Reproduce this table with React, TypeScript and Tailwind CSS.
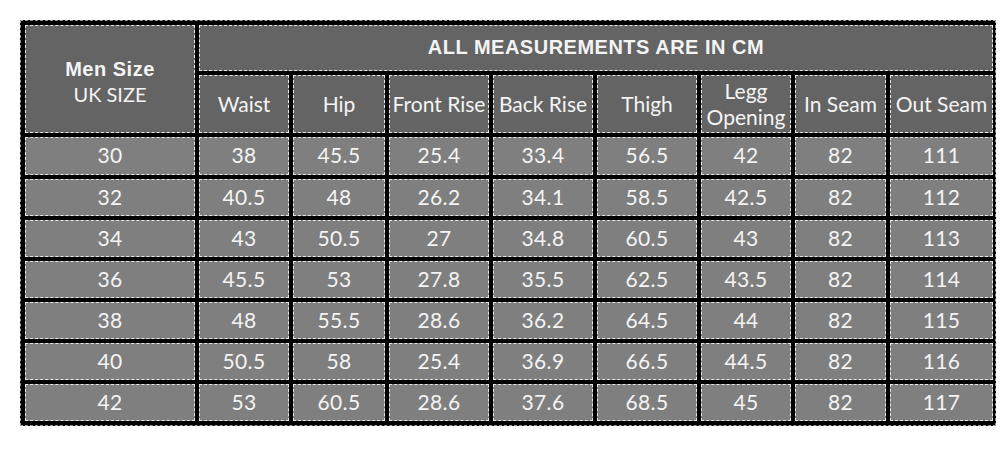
const columns = ["Waist", "Hip", "Front Rise", "Back Rise", "Thigh", "Legg Opening", "In Seam", "Out Seam"];

const rows = [
  ["30", "38", "45.5", "25.4", "33.4", "56.5", "42", "82", "111"],
  ["32", "40.5", "48", "26.2", "34.1", "58.5", "42.5", "82", "112"],
  ["34", "43", "50.5", "27", "34.8", "60.5", "43", "82", "113"],
  ["36", "45.5", "53", "27.8", "35.5", "62.5", "43.5", "82", "114"],
  ["38", "48", "55.5", "28.6", "36.2", "64.5", "44", "82", "115"],
  ["40", "50.5", "58", "25.4", "36.9", "66.5", "44.5", "82", "116"],
  ["42", "53", "60.5", "28.6", "37.6", "68.5", "45", "82", "117"],
];

const cell = "flex items-center justify-center border border-dashed border-[#e6e6e6] text-[#f4f4f4] text-center";
const calibri = "font-['Lato','Noto_Sans',sans-serif]";
const arialBold = "font-['Liberation_Sans',Arial,sans-serif] font-bold";

export default function App() {
  return (
    <div className="w-[1000px] h-[454px] bg-white pl-[20px] pt-[20px]">
      <div className="w-[976px] bg-black p-[4px] border border-dashed border-[#9a9a9a]">
        <div className="grid grid-cols-[170px_90px_92px_100px_100px_100px_90px_91px_103px] grid-rows-[46px_58px_38px_repeat(6,37px)] gap-[4px]">
          {/* size header */}
          <div className={`${cell} row-span-2 flex-col bg-[#646464] pt-[6px]`}>
            <span className={`${arialBold} text-[20px] leading-[25px] tracking-[0.5px]`}>Men Size</span>
            <span className={`${calibri} text-[20px] leading-[25px]`}>UK SIZE</span>
          </div>
          <div className={`${cell} col-span-8 bg-[#646464]`}>
            <span className={`${arialBold} text-[20px] tracking-[0.5px] pb-[2px]`}>ALL MEASUREMENTS ARE IN CM</span>
          </div>
          {columns.map((c) => (
            <div key={c} className={`${cell} bg-[#646464] ${calibri} text-[21px] leading-[26px] px-[2px]`}>
              {c === "Legg Opening" ? (
                <span>Legg<br />Opening</span>
              ) : (
                <span className="whitespace-nowrap">{c}</span>
              )}
            </div>
          ))}
          {rows.map((r) =>
            r.map((v, i) => (
              <div key={r[0] + "-" + i} className={`${cell} bg-[#7f7f7f] ${calibri} text-[21px] tracking-[0.4px] pb-[2px]`}>
                {v}
              </div>
            ))
          )}
        </div>
      </div>
    </div>
  );
}
